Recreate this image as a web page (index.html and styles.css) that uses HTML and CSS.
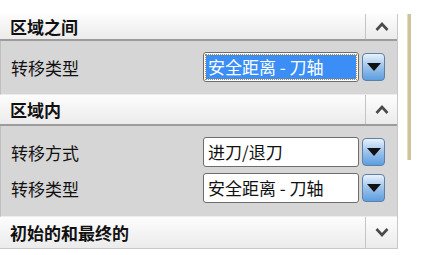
FILE: index.html
```html
<!DOCTYPE html>
<html>
	<head>
		<meta charset="UTF-8">
		<title>转移设置</title>
		<link rel="stylesheet" href="styles.css">
	</head>
	<body>
		<div class="wrap">
			<div class="panel">
				<div class="head first">
					<div class="title">区域之间</div>
					<div class="fold"><svg width="14" height="9" viewBox="0 0 14 9"><polyline points="1.5,8 7,2 12.5,8" fill="none" stroke="#4a4a4a" stroke-width="2.6"/></svg></div>
				</div>
				<div class="body sec1">
					<div class="row">
						<div class="label">转移类型</div>
						<div class="combo">
							<div class="field active"><span>安全距离 - 刀轴</span></div>
							<div class="btn"><i></i></div>
						</div>
					</div>
				</div>
				<div class="head">
					<div class="title">区域内</div>
					<div class="fold"><svg width="14" height="9" viewBox="0 0 14 9"><polyline points="1.5,8 7,2 12.5,8" fill="none" stroke="#4a4a4a" stroke-width="2.6"/></svg></div>
				</div>
				<div class="body sec2">
					<div class="row">
						<div class="label">转移方式</div>
						<div class="combo">
							<div class="field"><span>进刀/退刀</span></div>
							<div class="btn"><i></i></div>
						</div>
					</div>
					<div class="row">
						<div class="label">转移类型</div>
						<div class="combo">
							<div class="field"><span>安全距离 - 刀轴</span></div>
							<div class="btn"><i></i></div>
						</div>
					</div>
				</div>
				<div class="head last">
					<div class="title">初始的和最终的</div>
					<div class="fold"><svg width="14" height="9" viewBox="0 0 14 9"><polyline points="1.5,1 7,7 12.5,1" fill="none" stroke="#4a4a4a" stroke-width="2.6"/></svg></div>
				</div>
			</div>
			<div class="track"></div>
		</div>
	</body>
</html>
```
FILE: styles.css
```css
* {
	margin: 0;
	padding: 0;
	box-sizing: border-box;
}

body {
	background-color: #ffffff;
	font-family: "Noto Sans CJK SC", "Liberation Sans", sans-serif;
	font-size: 17px;
	color: #111;
}

.wrap {
	display: flex;
	padding-top: 14px;
}

.panel {
	width: 398px;
	border-right: 1px solid #c8c8c8;
}

.track {
	width: 4px;
	height: 146px;
	margin-left: 9px;
	background-color: #cfc39a;
	border-left: 1px solid #e4dcc0;
}

.head {
	display: flex;
	height: 31px;
	background: linear-gradient(#fdfdfd, #ebebeb);
	border-bottom: 2px solid #9c9c9c;
}

.head.first {
	height: 27px;
}

.head.last {
	height: 32px;
	border-bottom: 1px solid #c8c8c8;
}

.title {
	flex: 1;
	padding-left: 10px;
	font-weight: bold;
	font-size: 17px;
	line-height: 29px;
}

.first .title {
	line-height: 25px;
}

.last .title {
	line-height: 31px;
}

.fold {
	width: 32px;
	border-left: 1px solid #c4c4c4;
	display: flex;
	align-items: center;
	justify-content: center;
}

.body {
	background-color: #d6d6d6;
	border-left: 1px solid #c0c0c0;
	border-bottom: 1px solid #ececec;
}

.sec1 {
	padding: 11px 0 12px 0;
}

.sec2 {
	padding: 11px 0 13px 0;
}

.row {
	display: flex;
	align-items: center;
	height: 30px;
	margin-bottom: 6px;
}

.row:last-child {
	margin-bottom: 0;
}

.label {
	width: 202px;
	padding-left: 10px;
	font-size: 17px;
}

.combo {
	display: flex;
	align-items: center;
	gap: 3px;
}

.field {
	width: 156px;
	height: 30px;
	border: 1px solid #6d6d6d;
	border-radius: 3px;
	background-color: #ffffff;
	padding: 2px;
}

.field span {
	display: block;
	height: 24px;
	padding-left: 2px;
	line-height: 24px;
	font-size: 17px;
	white-space: nowrap;
}

.field.active span {
	background-color: #3a8ef6;
	color: #ffffff;
	outline: 1px dotted #c8882a;
}

.btn {
	width: 23px;
	height: 28px;
	border: 1px solid #5d7fa8;
	border-radius: 4px;
	background: linear-gradient(#e8f2fc, #9cc2ea 50%, #5c9ee0);
	display: flex;
	align-items: center;
	justify-content: center;
}

.btn i {
	width: 0;
	height: 0;
	border-left: 7px solid transparent;
	border-right: 7px solid transparent;
	border-top: 8px solid #111;
}
```
